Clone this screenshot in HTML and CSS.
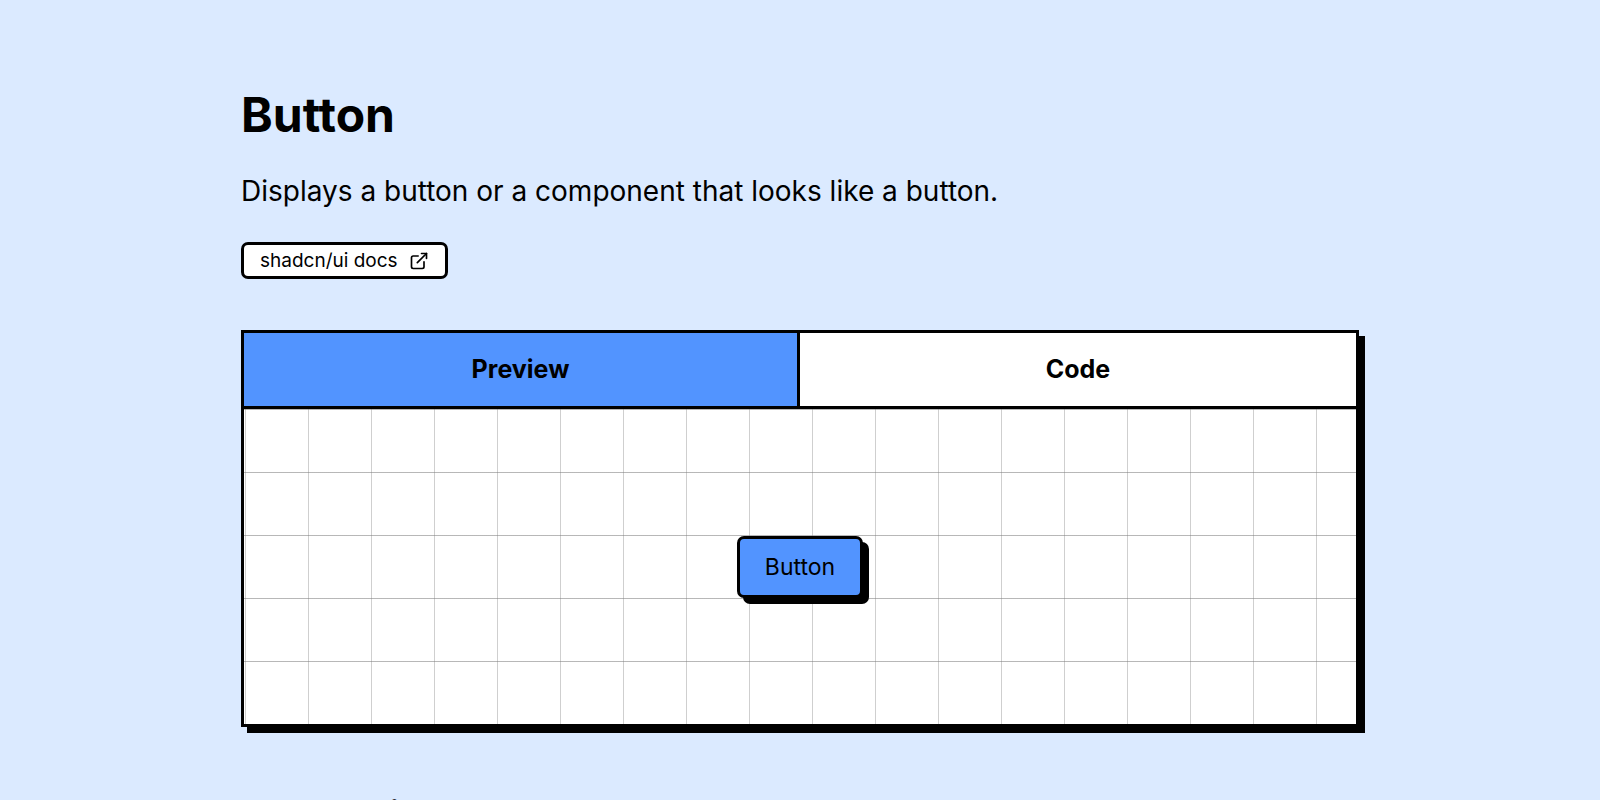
FILE: index.html
```html
<!doctype html>
<html lang="en">

<head>
    <meta charset="utf-8">
    <title>Button</title>
    <link rel="stylesheet" href="styles.css">
</head>

<body>
    <main class="page">
        <h1>Button</h1>
        <p class="description">Displays a button or a component that looks like a button.</p>
        <a class="docs-link" href="#">
            shadcn/ui docs
            <svg viewBox="0 0 24 24" width="20" height="20" fill="none" stroke="currentColor" stroke-width="2" stroke-linecap="round" stroke-linejoin="round" aria-hidden="true">
                <path d="M15 3h6v6" />
                <path d="M10 14 21 3" />
                <path d="M18 13v6a2 2 0 0 1-2 2H5a2 2 0 0 1-2-2V8a2 2 0 0 1 2-2h6" />
            </svg>
        </a>

        <div class="example">
            <div class="tabs" role="tablist">
                <button class="tab active" role="tab" aria-selected="true">Preview</button>
                <button class="tab" role="tab" aria-selected="false">Code</button>
            </div>
            <div class="preview" role="tabpanel">
                <button class="btn">Button</button>
            </div>
        </div>

        <h2>Installation</h2>
    </main>
</body>

</html>
```
FILE: styles.css
```css
* {
    box-sizing: border-box;
}

body {
    margin: 0;
    background-color: #dbeaff;
    color: black;
    font-family: Inter, "Open Sans", sans-serif;
}

button {
    font-family: inherit;
    color: inherit;
    cursor: pointer;
}

.page {
    max-width: 1118px;
    margin: 0 auto;
    padding: 84px 0;
}

h1 {
    margin: 0 0 26px;
    font-size: 48px;
    font-weight: 700;
    line-height: 62px;
}

.description {
    margin: 0 0 32px;
    font-size: 28px;
    line-height: 38px;
}

/* Link to the docs */
.docs-link {
    display: flex;
    align-items: center;
    gap: 11px;
    width: fit-content;
    height: 37px;
    padding: 0 16px;
    border: 3px solid black;
    border-radius: 7px;
    background-color: white;
    color: black;
    font-size: 19px;
    text-decoration: none;
}

/* Preview / code box */
.example {
    margin-top: 51px;
    border: 3px solid black;
    background-color: white;
    box-shadow: 6px 6px 0 black;
}

.tabs {
    display: grid;
    grid-template-columns: 1fr 1fr;
    border-bottom: 3px solid black;
}

.tab {
    height: 73px;
    padding: 0 0 2px;
    border: none;
    background-color: white;
    font-size: 25px;
    font-weight: 700;
}

.tab.active {
    border-right: 3px solid black;
    background-color: #5294ff;
}

.preview {
    display: flex;
    align-items: center;
    justify-content: center;
    height: 315px;
    background-image:
        linear-gradient(to right, #80808060 1px, transparent 1px),
        linear-gradient(to bottom, #80808090 1px, transparent 1px);
    background-size: 63px 63px;
    background-position: 1px 0;
}

.btn {
    height: 62px;
    padding: 0 25px;
    border: 3px solid black;
    border-radius: 7px;
    background-color: #5294ff;
    box-shadow: 6px 6px 0 black;
    font-size: 23px;
}

h2 {
    margin: 65px 0 0;
    font-size: 38px;
    font-weight: 700;
    line-height: 46px;
}
```
